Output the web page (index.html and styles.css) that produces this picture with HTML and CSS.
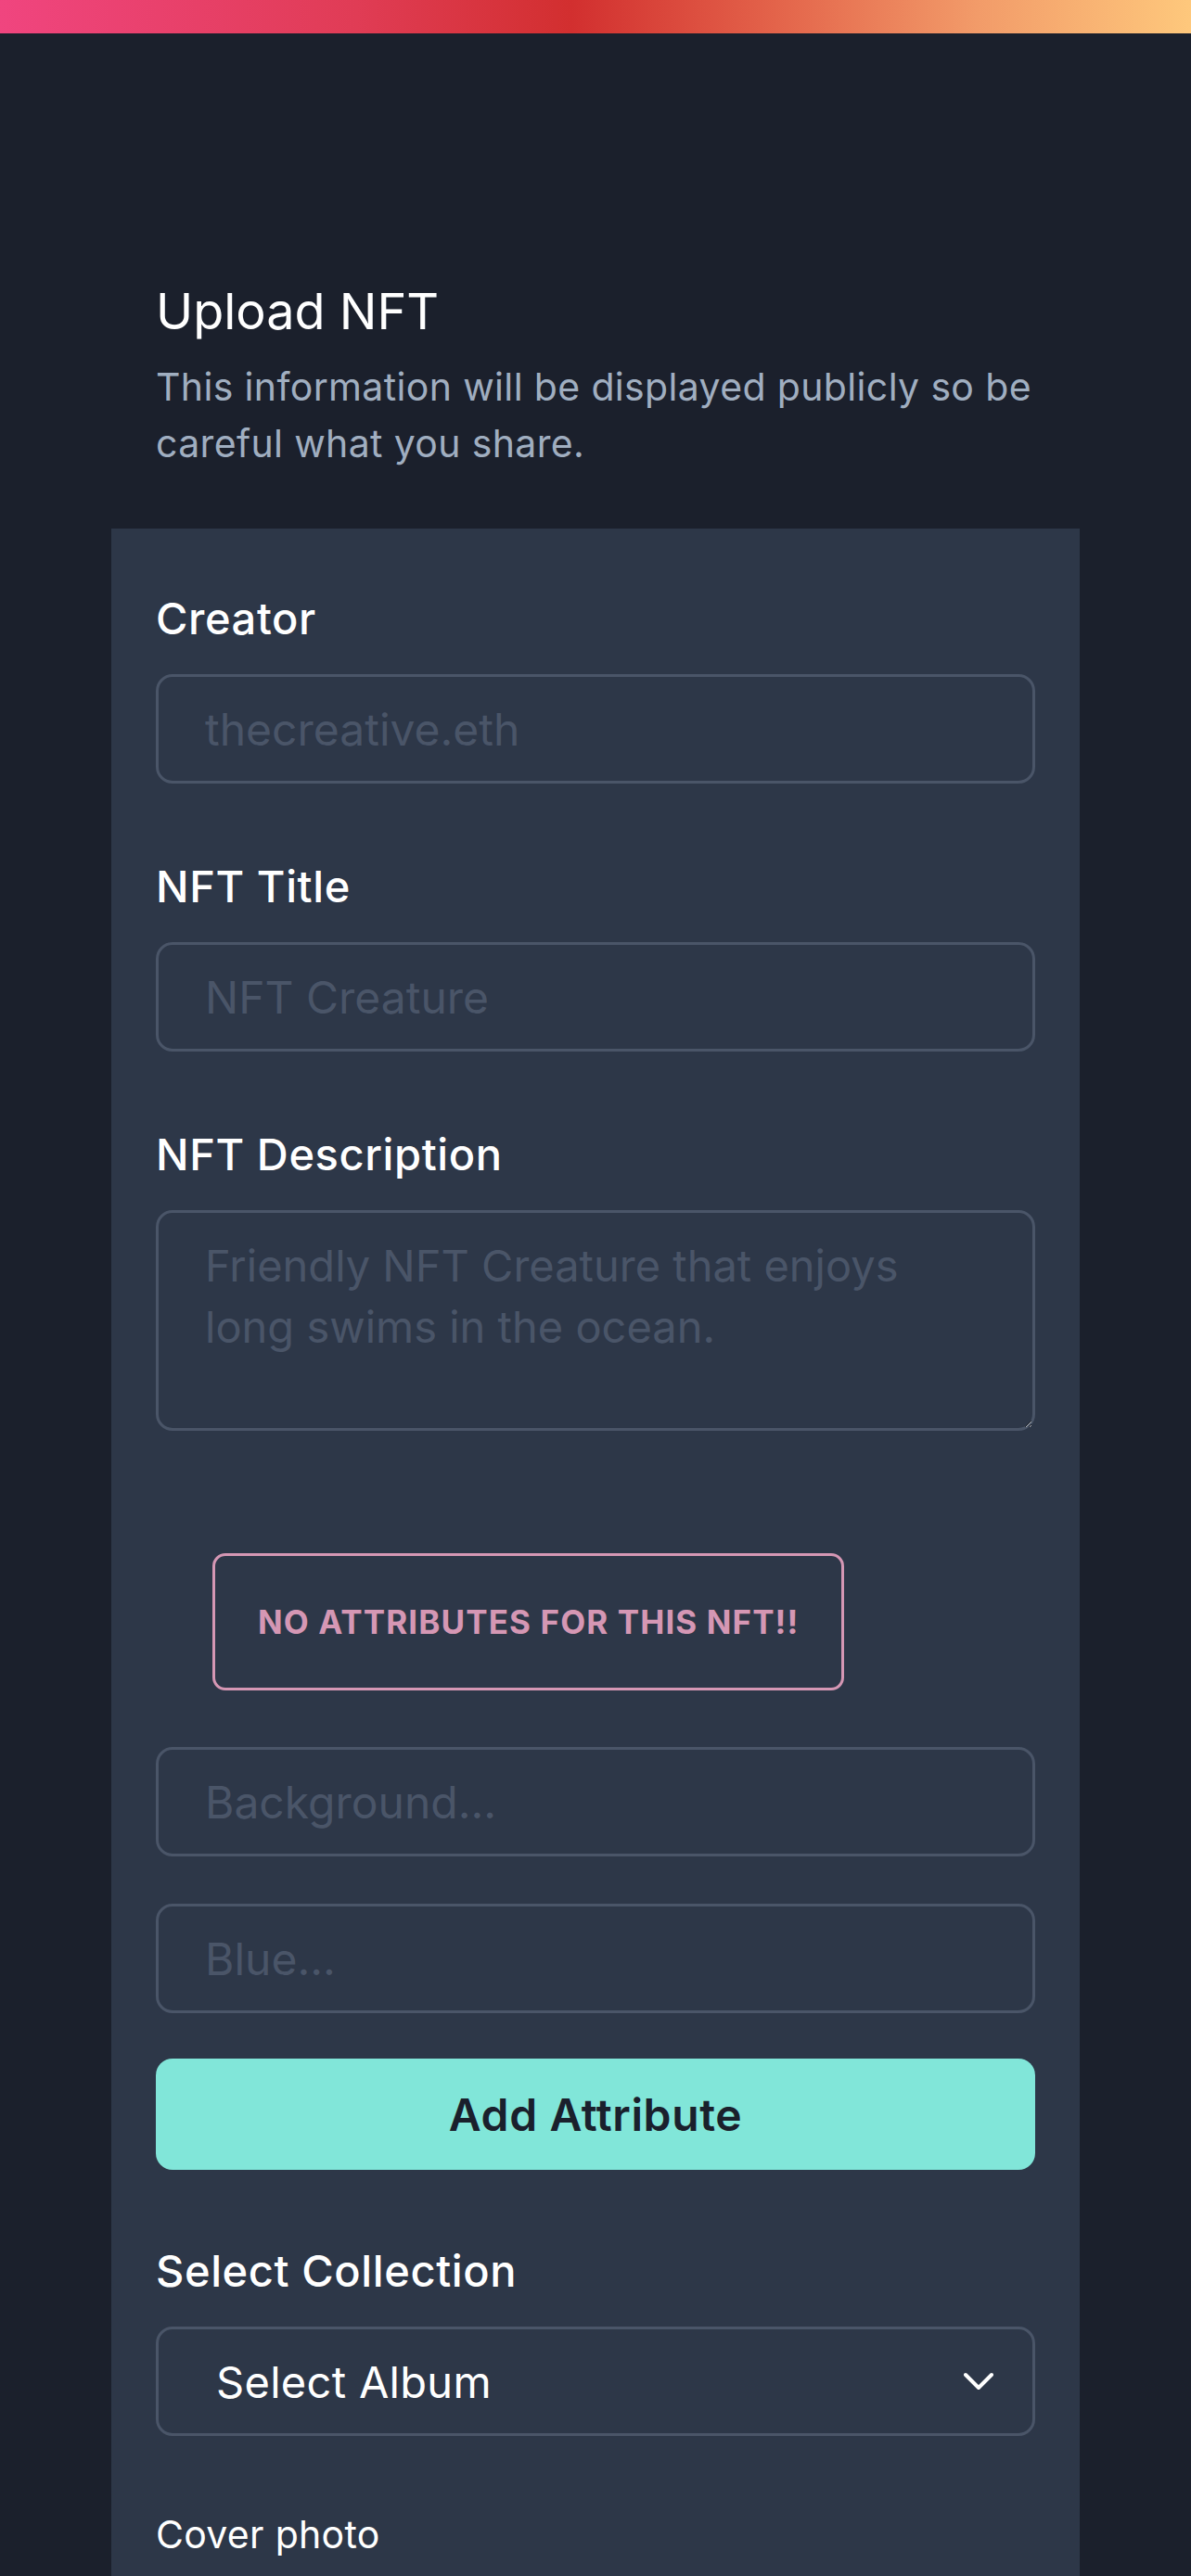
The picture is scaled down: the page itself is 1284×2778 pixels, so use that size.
FILE: index.html
```html
<!DOCTYPE html>
<html lang="en">
<head>
<meta charset="utf-8">
<title>Upload NFT</title>
<link rel="stylesheet" href="styles.css">
</head>
<body>
<div class="topbar"></div>
<main class="page">
  <header class="header">
    <h1 class="title">Upload NFT</h1>
    <p class="subtitle">This information will be displayed publicly so be careful what you share.</p>
  </header>
  <section class="card">
    <div class="field">
      <label class="label" for="creator">Creator</label>
      <input class="input" id="creator" type="text" placeholder="thecreative.eth">
    </div>
    <div class="field field-next">
      <label class="label" for="title">NFT Title</label>
      <input class="input" id="title" type="text" placeholder="NFT Creature">
    </div>
    <div class="field field-next">
      <label class="label" for="desc">NFT Description</label>
      <textarea class="textarea" id="desc" placeholder="Friendly NFT Creature that enjoys long swims in the ocean."></textarea>
    </div>
    <div class="attr-wrap">
      <div class="attr-empty">NO ATTRIBUTES FOR THIS NFT!!</div>
    </div>
    <input class="input attr-input" type="text" placeholder="Background...">
    <input class="input attr-input2" type="text" placeholder="Blue...">
    <button class="add-btn" type="button">Add Attribute</button>
    <div class="field field-collection">
      <label class="label">Select Collection</label>
      <div class="select">
        <span>Select Album</span>
        <svg class="chevron" width="32" height="20" viewBox="0 0 32 20" fill="none">
          <polyline points="2,3 16,17 30,3" stroke="#ffffff" stroke-width="4" stroke-linecap="round" stroke-linejoin="round"/>
        </svg>
      </div>
    </div>
    <div class="cover">Cover photo</div>
    <div class="cover-space"></div>
  </section>
</main>
</body>
</html>
```

FILE: styles.css
```css
* {
  box-sizing: border-box;
}

html, body {
  margin: 0;
  padding: 0;
}

body {
  background: #1b202c;
  font-family: Inter, "Noto Sans", "Liberation Sans", sans-serif;
  color: #ffffff;
}

.topbar {
  height: 36px;
  background: linear-gradient(to right, #f0457f 0%, #e03c55 30%, #d22f2f 48%, #e3634a 65%, #f29b69 82%, #fec87c 100%);
}

.page {
  padding: 0 120px;
}

.header {
  padding: 258px 0 0 48px;
}

.title {
  margin: 0;
  font-size: 54px;
  line-height: 84px;
  font-weight: 400;
  color: #ffffff;
}

.subtitle {
  margin: 9px 0 0 0;
  font-size: 41px;
  line-height: 61px;
  color: #a0aec0;
  font-weight: 400;
  letter-spacing: 0.35px;
}

.card {
  margin-top: 61px;
  background: #2d3748;
  padding: 62px 48px 120px 48px;
  display: flex;
  flex-direction: column;
}

.field {
  display: flex;
  flex-direction: column;
}

.field-next {
  margin-top: 76px;
}

.label {
  font-size: 47px;
  line-height: 70px;
  font-weight: 500;
  color: #ffffff;
  margin-bottom: 25px;
  letter-spacing: 0.6px;
}

.input {
  display: block;
  width: 100%;
  height: 118px;
  border: 3px solid #4a5568;
  border-radius: 18px;
  background: transparent;
  padding: 0 50px;
  font-family: inherit;
  font-size: 48px;
  color: #ffffff;
  outline: none;
}

.input::placeholder,
.textarea::placeholder {
  color: #4a5568;
  opacity: 1;
}

.textarea {
  display: block;
  width: 100%;
  height: 238px;
  border: 3px solid #4a5568;
  border-radius: 18px;
  background: transparent;
  padding: 24px 50px;
  font-family: inherit;
  font-size: 47px;
  line-height: 66px;
  color: #ffffff;
  resize: vertical;
  outline: none;
}

.attr-wrap {
  margin-top: 132px;
  padding-left: 61px;
  display: flex;
}

.attr-empty {
  height: 148px;
  display: flex;
  align-items: center;
  padding: 0 46px;
  border: 3px solid #d597b4;
  border-radius: 14px;
  color: #d597b4;
  font-size: 35px;
  font-weight: 700;
  letter-spacing: 1.1px;
}

.attr-input {
  margin-top: 61px;
}

.attr-input2 {
  margin-top: 51px;
}

.add-btn {
  margin-top: 49px;
  height: 120px;
  width: 100%;
  border: none;
  border-radius: 18px;
  background: #81e6d9;
  color: #1a202c;
  font-family: inherit;
  font-size: 48px;
  font-weight: 600;
  letter-spacing: 0.6px;
  cursor: pointer;
}

.field-collection {
  margin-top: 74px;
}

.select {
  height: 118px;
  border: 3px solid #4a5568;
  border-radius: 18px;
  display: flex;
  align-items: center;
  justify-content: space-between;
  padding: 0 42px 0 62px;
  font-size: 47px;
  letter-spacing: 0.3px;
  color: #ffffff;
}

.chevron {
  display: block;
}

.cover {
  margin-top: 76px;
  font-size: 41px;
  line-height: 60px;
  font-weight: 400;
  letter-spacing: 0.3px;
  color: #ffffff;
}

.cover-space {
  height: 200px;
}
```
